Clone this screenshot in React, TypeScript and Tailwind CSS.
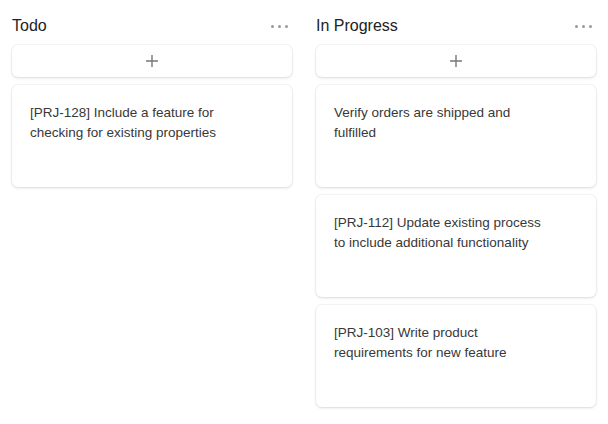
const columns = [
  {
    title: "Todo",
    cards: ["[PRJ-128] Include a feature for checking for existing properties"],
  },
  {
    title: "In Progress",
    cards: [
      "Verify orders are shipped and fulfilled",
      "[PRJ-112] Update existing process to include additional functionality",
      "[PRJ-103] Write product requirements for new feature",
    ],
  },
];

function Dots() {
  return (
    <div className="flex items-center gap-[4px]">
      <span className="block w-[3px] h-[3px] rounded-full bg-[#999]" />
      <span className="block w-[3px] h-[3px] rounded-full bg-[#999]" />
      <span className="block w-[3px] h-[3px] rounded-full bg-[#999]" />
    </div>
  );
}

function Column({ title, cards }: { title: string; cards: string[] }) {
  return (
    <div className="flex flex-col">
      <div className="flex h-6 items-center justify-between pt-[2px] pr-[4px]">
        <h2 className="text-[16px] text-[#222]">{title}</h2>
        <Dots />
      </div>
      <div className="mt-2 flex flex-col gap-2">
        <button className="flex h-8 items-center justify-center rounded-md bg-white shadow-[0_1px_3px_rgba(0,0,0,0.12),0_0_0_1px_rgba(0,0,0,0.03)]">
          <svg width="12" height="12" viewBox="0 0 12 12" stroke="#777" strokeWidth="1.4">
            <path d="M6 0v12M0 6h12" />
          </svg>
        </button>
        {cards.map((c) => (
          <div
            key={c}
            className="h-[102px] rounded-md bg-white px-[18px] pt-[18px] text-[13.5px] leading-5 text-[#383838] shadow-[0_1px_3px_rgba(0,0,0,0.12),0_0_0_1px_rgba(0,0,0,0.03)]"
          >
            <p className="max-w-[215px]">{c}</p>
          </div>
        ))}
      </div>
    </div>
  );
}

export default function App() {
  return (
    <div
      className="min-h-[424px] w-[608px] bg-white px-3 pt-[13px]"
      style={{ fontFamily: "'Liberation Sans', Arial, sans-serif" }}
    >
      <div className="grid grid-cols-2 gap-6">
        {columns.map((col) => (
          <Column key={col.title} title={col.title} cards={col.cards} />
        ))}
      </div>
    </div>
  );
}
